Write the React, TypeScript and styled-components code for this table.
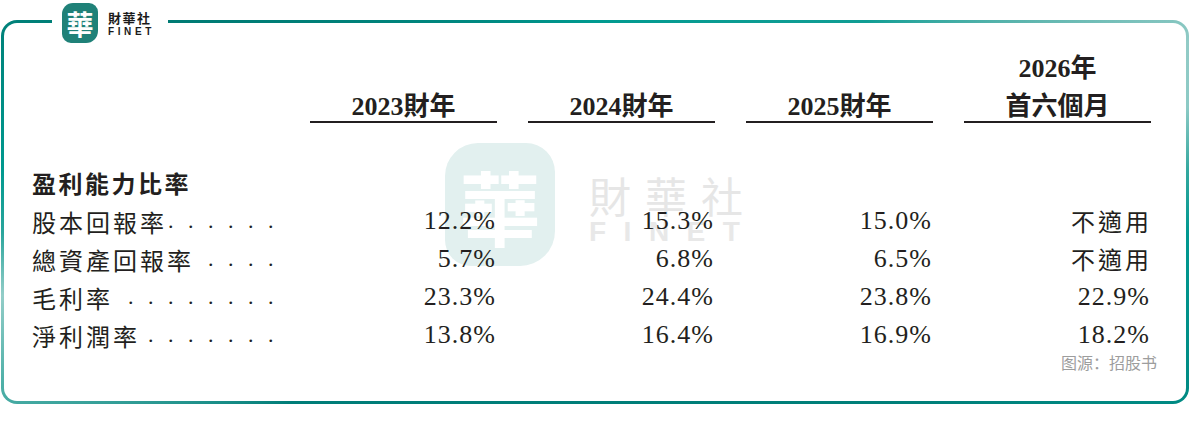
import styled, { createGlobalStyle } from 'styled-components';

const GlobalStyle = createGlobalStyle`
  html, body {
    margin: 0;
    padding: 0;
    background: #ffffff;
  }
`;

const serif = `"Liberation Serif", "Noto Sans CJK TC", serif`;
const cjk = `"Noto Sans CJK TC", "Liberation Serif", sans-serif`;

const Page = styled.div`
  position: relative;
  width: 1191px;
  height: 425px;
  padding: 20px 0 0 1px;
  box-sizing: border-box;
  overflow: hidden;
`;

const Frame = styled.div`
  width: 1188px;
  height: 384px;
  padding: 3px;
  box-sizing: border-box;
  border-radius: 16px;
  background: conic-gradient(
    from 0deg at 50% 50%,
    #009a90 0deg,
    #109d94 55deg,
    #5db5ae 66deg,
    #92cbc6 74deg,
    #8ccac5 80deg,
    #33a89f 86deg,
    #009890 92deg,
    #007f79 120deg,
    #007d78 238deg,
    #4fb0a8 254deg,
    #93cdc8 262deg,
    #2aa59c 268deg,
    #00998f 274deg,
    #007a73 292deg,
    #008a82 330deg,
    #009a90 360deg
  );
`;

const Inner = styled.div`
  position: relative;
  height: 100%;
  box-sizing: border-box;
  background: #ffffff;
  border-radius: 13px;
  padding: 32px 29px 0 28px;
`;

const Logo = styled.div`
  position: absolute;
  left: 52px;
  top: 0;
  width: 116px;
  height: 46px;
  background: #ffffff;
  display: flex;
  align-items: flex-start;
  gap: 10px;
  padding: 3px 0 0 10px;
  box-sizing: border-box;
  z-index: 2;
`;

const Seal = styled.div<{ $size: number; $bg: string; $fg: string }>`
  width: ${(p) => p.$size}px;
  height: ${(p) => Math.round(p.$size * 1.12)}px;
  border-radius: ${(p) => Math.round(p.$size * 0.3)}px ${(p) => Math.round(p.$size * 0.26)}px
    ${(p) => Math.round(p.$size * 0.32)}px ${(p) => Math.round(p.$size * 0.24)}px;
  background: ${(p) => p.$bg};
  color: ${(p) => p.$fg};
  display: flex;
  align-items: center;
  justify-content: center;
  font-family: ${cjk};
  font-weight: 700;
  font-size: ${(p) => Math.round(p.$size * 0.74)}px;
  line-height: 1;
`;

const LogoText = styled.div`
  display: flex;
  flex-direction: column;
  gap: 1px;
  padding-top: 8px;
`;

const LogoCn = styled.span`
  font-family: ${cjk};
  font-weight: 700;
  font-size: 13px;
  line-height: 14px;
  letter-spacing: 1.5px;
  color: #1b1b1b;
`;

const LogoEn = styled.span`
  font-family: "Liberation Sans", Arial, sans-serif;
  font-weight: 700;
  font-size: 10px;
  line-height: 11px;
  letter-spacing: 3.6px;
  color: #1b1b1b;
`;

const Watermark = styled.div`
  position: absolute;
  left: 441px;
  top: 120px;
  display: flex;
  align-items: center;
  gap: 34px;
  z-index: 0;
`;

const MarkText = styled.div`
  display: flex;
  flex-direction: column;
  padding-top: 8px;
`;

const MarkCn = styled.span`
  font-family: ${cjk};
  font-size: 42px;
  line-height: 46px;
  letter-spacing: 14px;
  color: #e6e6e6;
`;

const MarkEn = styled.span`
  font-family: "Liberation Sans", Arial, sans-serif;
  font-weight: 700;
  font-size: 28px;
  line-height: 28px;
  letter-spacing: 17.5px;
  color: #e8e8e8;
`;

const Table = styled.div`
  position: relative;
  z-index: 1;
  display: flex;
  flex-direction: column;
  color: #231f20;
`;

const Row = styled.div<{ $gap?: number }>`
  display: grid;
  grid-template-columns: 247px repeat(4, 187px);
  column-gap: 31px;
  margin-top: ${(p) => p.$gap ?? 0}px;
`;

const HeadCell = styled.div`
  align-self: end;
  display: flex;
  flex-direction: column;
  align-items: center;
  gap: 10px;
  border-bottom: 2px solid #231f20;
  font-family: ${serif};
  font-weight: 700;
  font-size: 26px;
  line-height: 28px;
`;

const Section = styled.div`
  font-family: ${cjk};
  font-weight: 700;
  font-size: 24px;
  line-height: 38px;
  letter-spacing: 2.5px;
  white-space: nowrap;
`;

const Label = styled.div`
  display: flex;
  align-items: center;
  height: 38px;
  margin-right: -31px;
  padding-right: 22px;
  white-space: nowrap;
`;

const LabelName = styled.span`
  flex-shrink: 0;
  font-family: ${cjk};
  font-size: 24px;
  letter-spacing: 3px;
`;

const Leader = styled.span`
  flex-shrink: 0;
  margin-left: auto;
  font-family: ${serif};
  font-size: 22px;
  letter-spacing: 14.5px;
`;

const Value = styled.div<{ $cjk?: boolean }>`
  height: 38px;
  line-height: 38px;
  text-align: right;
  white-space: nowrap;
  font-family: ${(p) => (p.$cjk ? cjk : serif)};
  font-size: ${(p) => (p.$cjk ? 24 : 26)}px;
  letter-spacing: ${(p) => (p.$cjk ? 3 : 1)}px;
  margin-right: ${(p) => (p.$cjk ? -1 : 1)}px;
`;

const Caption = styled.div`
  position: relative;
  z-index: 1;
  text-align: right;
  font-family: "Noto Sans CJK SC", sans-serif;
  font-size: 16px;
  line-height: 16px;
  color: #9d9d9d;
`;

const headers: string[][] = [['2023財年'], ['2024財年'], ['2025財年'], ['2026年', '首六個月']];

const rows: { name: string; dots: number; values: string[] }[] = [
  { name: '股本回報率', dots: 6, values: ['12.2%', '15.3%', '15.0%', '不適用'] },
  { name: '總資產回報率', dots: 4, values: ['5.7%', '6.8%', '6.5%', '不適用'] },
  { name: '毛利率', dots: 8, values: ['23.3%', '24.4%', '23.8%', '22.9%'] },
  { name: '淨利潤率', dots: 7, values: ['13.8%', '16.4%', '16.9%', '18.2%'] },
];

export default function App() {
  return (
    <Page>
      <GlobalStyle />
      <Logo>
        <Seal $size={36} $bg="#1f8178" $fg="#ffffff">華</Seal>
        <LogoText>
          <LogoCn>財華社</LogoCn>
          <LogoEn>FINET</LogoEn>
        </LogoText>
      </Logo>
      <Frame>
        <Inner>
          <Watermark>
            <Seal $size={110} $bg="#e2f0ef" $fg="#ffffff">華</Seal>
            <MarkText>
              <MarkCn>財華社</MarkCn>
              <MarkEn>FINET</MarkEn>
            </MarkText>
          </Watermark>
          <Table>
            <Row>
              <div />
              {headers.map((lines) => (
                <HeadCell key={lines.join('')}>
                  {lines.map((l) => (
                    <span key={l}>{l}</span>
                  ))}
                </HeadCell>
              ))}
            </Row>
            <Row $gap={41}>
              <Section>盈利能力比率</Section>
            </Row>
            {rows.map((r) => (
              <Row key={r.name}>
                <Label>
                  <LabelName>{r.name}</LabelName>
                  <Leader>{'.'.repeat(r.dots)}</Leader>
                </Label>
                {r.values.map((v, i) => (
                  <Value key={i} $cjk={!v.endsWith('%')}>
                    {v}
                  </Value>
                ))}
              </Row>
            ))}
          </Table>
          <Caption>图源：招股书</Caption>
        </Inner>
      </Frame>
    </Page>
  );
}
